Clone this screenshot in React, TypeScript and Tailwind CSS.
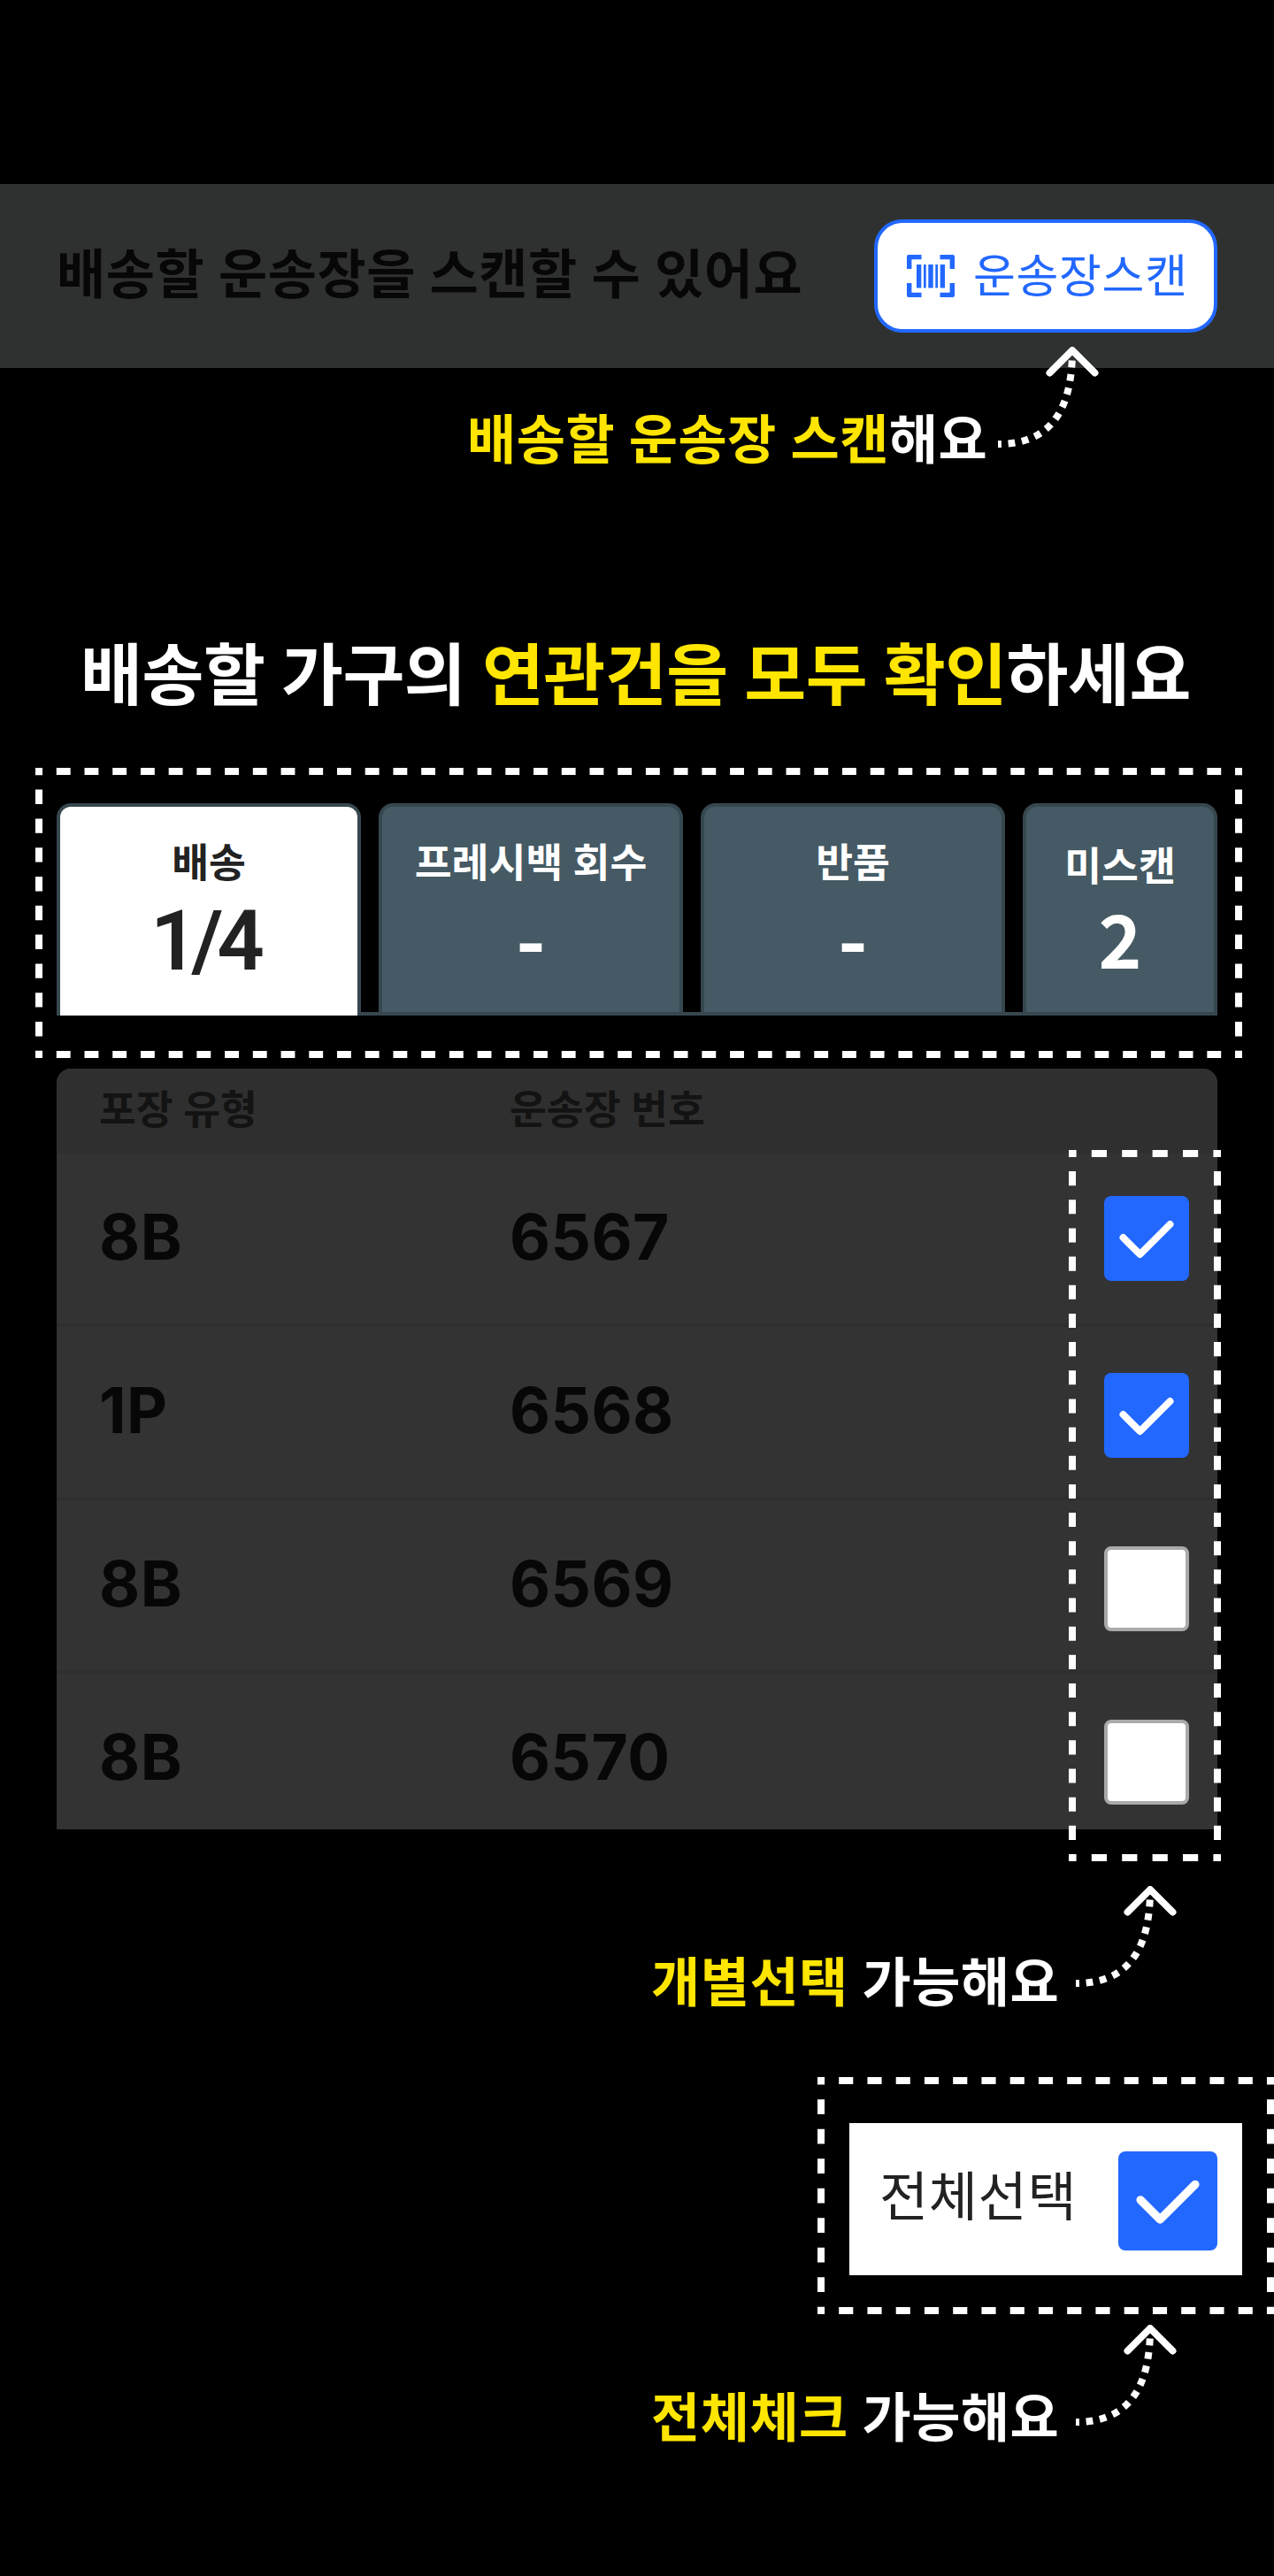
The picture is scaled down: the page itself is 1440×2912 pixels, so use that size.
import React from "react";

const KR = "font-['Inter','Noto_Sans_CJK_KR',sans-serif]";

function DashedFrame({ w, h }: { w: number; h: number }) {
  const px = w / Math.round(w / 32);
  const py = h / Math.round(h / 32);
  const dx = `${px / 2} ${px / 2}`;
  const dy = `${py / 2} ${py / 2}`;
  return (
    <svg className="pointer-events-none absolute left-0 top-0" width={w} height={h} viewBox={`0 0 ${w} ${h}`} fill="none" stroke="#fff" strokeWidth="8">
      <path d={`M0 4H${w}M0 ${h - 4}H${w}`} strokeDasharray={dx} strokeDashoffset={px / 4} />
      <path d={`M4 0V${h}M${w - 4} 0V${h}`} strokeDasharray={dy} strokeDashoffset={py / 4} />
    </svg>
  );
}

function CurvedArrow() {
  return (
    <svg className="shrink-0" width="116" height="114" viewBox="0 0 116 114" fill="none" stroke="#fff" strokeWidth="8">
      <path d="M0 110C56 110 84 76 84 4" strokeDasharray="7.75 7.75" strokeDashoffset="3.9" />
      <path d="M58.5 29.5L84 4L109.5 29.5" strokeLinecap="round" strokeLinejoin="round" />
    </svg>
  );
}

function Checkbox({ checked, className = "" }: { checked: boolean; className?: string }) {
  if (!checked) return <div className={`size-24 rounded-lg border-4 border-[#aaaaaa] bg-white ${className}`} />;
  return (
    <div className={`size-24 rounded-lg bg-[#2268ff] ${className}`}>
      <svg className="size-full" viewBox="0 0 96 96" fill="none" stroke="#fff" strokeWidth="8" strokeLinecap="round" strokeLinejoin="round">
        <path d="M21.5 47L40.5 66L74.5 32" />
      </svg>
    </div>
  );
}

function BarcodeIcon() {
  return (
    <svg className="shrink-0" width="54" height="48" viewBox="0 0 54 48" fill="#2268ff">
      <path d="M2 0H16.500V5.300H5.400V16H0V2Q0 0 2 0ZM37.500 0H52Q54 0 54 2V16H48.600V5.300H37.500ZM0 32H5.400V42.700H16.500V48H2Q0 48 0 46ZM48.600 32H54V46Q54 48 52 48H37.500V42.700H48.600Z" />
      <path d="M11 11H16.300V37.500H11ZM19 11H21.700V37.500H19ZM24.300 11H29.700V37.500H24.300ZM32.300 11H35V37.500H32.300ZM37.700 11H43V37.500H37.700Z" />
    </svg>
  );
}

function Note({ hot, rest, className, textTop = "mt-[61px]" }: { hot: string; rest: string; className: string; textTop?: string }) {
  return (
    <div className={`flex items-start ${className}`}>
      <p className={`whitespace-pre text-[60px] font-semibold leading-[88px] tracking-[0.5px] text-white ${textTop}`}>
        <span className="text-[#ffe500]">{hot}</span>
        {rest}
      </p>
      <div className="ml-auto">
        <CurvedArrow />
      </div>
    </div>
  );
}

const tabs = [
  { label: "프레시백 회수", value: "-", width: "w-[344px]", pad: "pt-9", num: "mt-3 text-[90px] font-semibold" },
  { label: "반품", value: "-", width: "w-[344px]", pad: "pt-9", num: "mt-3 text-[90px] font-semibold" },
  { label: "미스캔", value: "2", width: "w-[220px]", pad: "pt-10", num: "mt-[9px] text-[83px] font-semibold" },
];

const rows = [
  { type: "8B", no: "6567", checked: true, top: "mt-12" },
  { type: "1P", no: "6568", checked: true, top: "mt-[52px]" },
  { type: "8B", no: "6569", checked: false, top: "mt-[52px]" },
  { type: "8B", no: "6570", checked: false, top: "mt-[52px]" },
];

export default function App() {
  return (
    <main className={`flex h-[2912px] w-[1440px] flex-col overflow-hidden bg-black pt-[208px] ${KR}`}>
      <header className="flex h-[208px] shrink-0 items-center justify-between bg-[#2f3130] px-16">
        <h1 className="mb-[5px] whitespace-nowrap text-[60px] font-semibold leading-[88px] tracking-[0.55px] text-[#070707]">배송할 운송장을 스캔할 수 있어요</h1>
        <button className="flex h-32 w-[388px] items-center rounded-[32px] border-4 border-[#2268ff] bg-white pl-[33px] text-[52px] leading-none text-[#2268ff]">
          <BarcodeIcon />
          <span className="ml-[21px] mt-px whitespace-nowrap tracking-[0.7px]">운송장스캔</span>
        </button>
      </header>

      <Note hot="배송할 운송장 스캔" rest="해요" className="-mt-6 ml-[528px] h-[160px] w-[716px] shrink-0" />

      <h2 className="mr-[3px] mt-[155px] h-[111px] shrink-0 whitespace-nowrap text-center text-[76px] font-semibold leading-[112px] tracking-[-0.5px] text-white">
        배송할 가구의 <span className="text-[#ffe500]">연관건을 모두 확인</span>하세요
      </h2>

      <section className="relative ml-10 mt-[50px] h-[328px] w-[1364px] shrink-0 px-6 pt-10">
        <DashedFrame w={1364} h={328} />
        <div className="flex h-60 w-[1312px]">
          <div className="flex w-[344px] flex-col items-center rounded-t-2xl border-x-4 border-t-4 border-[#37474f] bg-white pt-9 text-[#222222]">
            <span className="text-[45.5px] font-semibold leading-[56px]">배송</span>
            <span className="mr-[10px] mt-[14px] font-['Roboto',sans-serif] text-[94px] font-semibold leading-[92px] tracking-[-7px]">1/4</span>
          </div>
          <div className="flex flex-1 gap-5 border-b-4 border-[#37474f] pl-5">
            {tabs.map((t) => (
              <div key={t.label} className={`flex ${t.width} flex-col items-center rounded-t-2xl border-x-4 border-t-4 border-[#37474f] bg-[#455a64] text-white ${t.pad}`}>
                <span className="whitespace-nowrap text-[45.5px] font-semibold leading-[56px]">{t.label}</span>
                <span className={`font-['Noto_Sans_CJK_KR',sans-serif] leading-[84px] ${t.num}`}>{t.value}</span>
              </div>
            ))}
          </div>
        </div>
      </section>

      <section className="relative ml-16 mt-3 h-[860px] w-[1312px] shrink-0 overflow-visible rounded-t-2xl bg-[#333333]">
        <div className="grid h-24 grid-cols-[464px_1fr] rounded-t-2xl bg-[#2f2f2f] pl-12 text-[45.5px] font-semibold leading-[94px] text-[#131313]">
          <span>포장 유형</span>
          <span>운송장 번호</span>
        </div>
        {rows.map((r, i) => (
          <div key={r.no} className={`grid grid-cols-[464px_672px_96px] pl-12 text-[71px] font-bold leading-[189px] tracking-[0.5px] text-[#070707] ${i < 3 ? "h-[196px] border-b-4 border-[#2f2f2f]" : "h-[176px]"}`}>
            <span>{r.type}</span>
            <span>{r.no}</span>
            <Checkbox checked={r.checked} className={r.top} />
          </div>
        ))}
        <div className="absolute left-[1144px] top-[92px] h-[804px] w-[172px]">
          <DashedFrame w={172} h={804} />
        </div>
      </section>

      <Note hot="개별선택" rest=" 가능해요" className="ml-[736px] mt-16 h-[160px] w-[596px] shrink-0" textTop="mt-[65px]" />

      <section className="relative ml-[924px] mt-14 h-[268px] w-[516px] shrink-0 px-9 pt-[52px]">
        <DashedFrame w={516} h={268} />
        <div className="flex h-[172px] w-[444px] items-center justify-between bg-white pl-[34px] pr-7 text-[60px] leading-none text-[#222222]">
          <span className="mb-[7px] whitespace-nowrap tracking-[0.6px]">전체선택</span>
          <Checkbox checked className="mt-1 size-28!" />
        </div>
      </section>

      <Note hot="전체체크" rest=" 가능해요" className="ml-[736px] mt-3 h-[160px] w-[596px] shrink-0" />
    </main>
  );
}
